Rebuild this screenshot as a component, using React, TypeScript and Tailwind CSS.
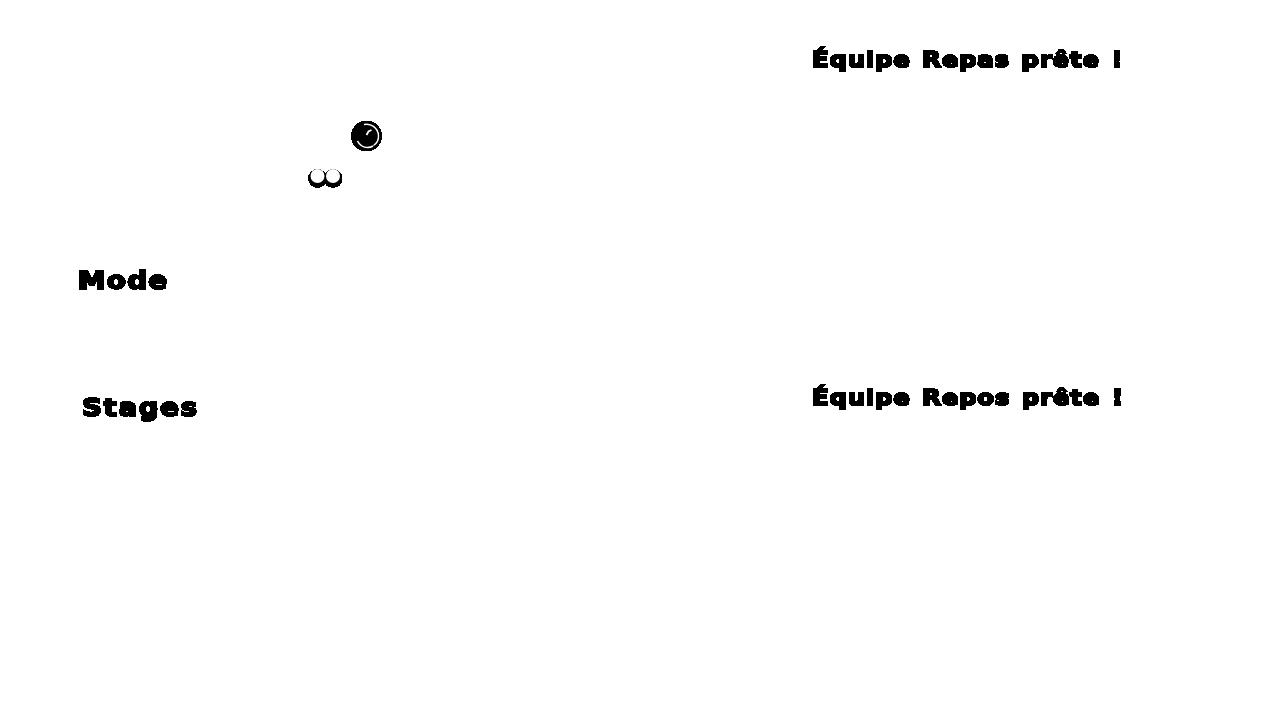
const labelFont = "font-['DejaVu_Sans'] font-bold text-black [-webkit-text-stroke:2px_black] origin-left scale-x-[1.16] whitespace-nowrap";

const TimerIcon = () => (
  <svg width="32" height="32" viewBox="0 0 32 32" className="block">
    <circle cx="15.5" cy="16" r="15.5" fill="#000" />
    <path d="M13 4.500a12 12 0 0 1 14.500 11c.3 5-2 8-5 10" fill="none" stroke="#fff" strokeWidth="1.400" />
    <path d="M6.500 21c2 4 5.500 6.500 10 6.500 2 0 4-.5 5.500-1.500" fill="none" stroke="#fff" strokeWidth="1.600" />
    <path d="M15.500 15l2-3.500 3-1.500" fill="none" stroke="#fff" strokeWidth="1.800" />
  </svg>
);

const EyesIcon = () => (
  <svg width="36" height="22" viewBox="0 0 36 22" className="block">
    <circle cx="9.500" cy="11.500" r="9.500" fill="#000" />
    <circle cx="25" cy="11.500" r="9.500" fill="#000" />
    <circle cx="9.500" cy="9" r="7" fill="#fff" />
    <circle cx="25" cy="9" r="7" fill="#fff" />
  </svg>
);

const App = () => {
  return (
    <div className="flex h-[720px] w-[1280px] overflow-hidden bg-white">
      <svg width="0" height="0" className="absolute">
        <filter id="hard" colorInterpolationFilters="sRGB">
          <feComponentTransfer>
            <feFuncA type="discrete" tableValues="0 0 1 1" />
          </feComponentTransfer>
        </filter>
      </svg>

      <div className="w-[812px] shrink-0 pl-[78px] pt-[120px] [filter:url(#hard)]">
        <div className="ml-[273px]">
          <TimerIcon />
        </div>
        <div className="ml-[230px] mt-[15px]">
          <EyesIcon />
        </div>
        <div className={`${labelFont} mt-[75px] text-[24px] leading-[34px] tracking-[1px]`}>Mode</div>
        <div className={`${labelFont} ml-[4px] mt-[93px] text-[24px] leading-[34px] tracking-[1.300px]`}>Stages</div>
      </div>

      <div className="flex-1 pt-[46px] [filter:url(#hard)]">
        <div className={`${labelFont} text-[21px] leading-[28px] tracking-[0.700px] [word-spacing:2px]`}>Équipe Repas prête !</div>
        <div className={`${labelFont} mt-[310px] text-[21px] leading-[28px] tracking-[0.700px] [word-spacing:2px]`}>Équipe Repos prête !</div>
      </div>
    </div>
  );
};

export default App;
